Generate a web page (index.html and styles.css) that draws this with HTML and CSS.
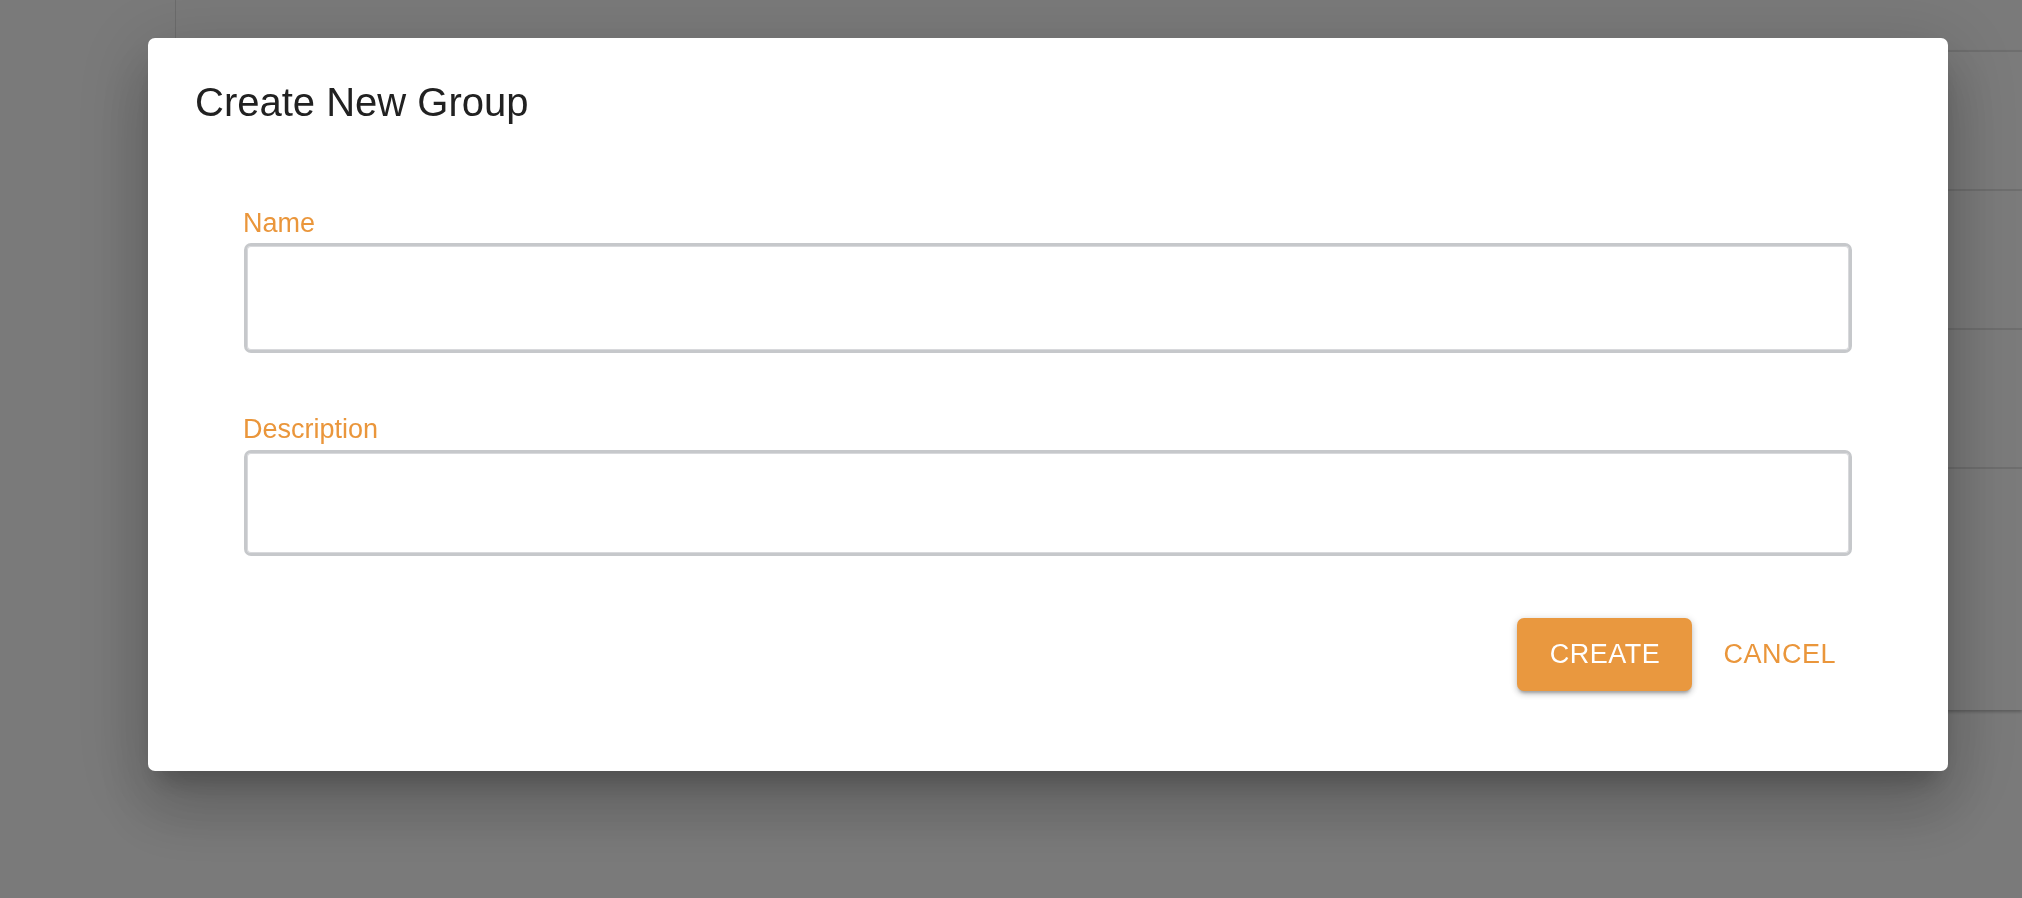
FILE: index.html
```html
<!DOCTYPE html>
<html lang="en">
<head>
<meta charset="utf-8">
<title>Create New Group</title>
<link rel="stylesheet" href="styles.css">
</head>
<body>
<div class="page">
  <aside class="sidebar">
    <div class="sidebar-head"></div>
  </aside>
  <main class="main">
    <div class="card">
      <div class="row"></div>
      <div class="row"></div>
      <div class="row"></div>
      <div class="row row-last"></div>
    </div>
  </main>
</div>
<div class="overlay">
  <div class="dialog" role="dialog">
    <h2 class="dialog-title">Create New Group</h2>
    <form class="dialog-form">
      <div class="field field-name">
        <label class="field-label" for="name">Name</label>
        <textarea class="field-input input-name" id="name"></textarea>
      </div>
      <div class="field field-desc">
        <label class="field-label" for="desc">Description</label>
        <textarea class="field-input input-desc" id="desc"></textarea>
      </div>
      <div class="actions">
        <button type="button" class="btn btn-primary">CREATE</button>
        <button type="button" class="btn btn-text">CANCEL</button>
      </div>
    </form>
  </div>
</div>
</body>
</html>
```

FILE: styles.css
```css
html, body {
  margin: 0;
  padding: 0;
  height: 100%;
}

body {
  font-family: "Liberation Sans", Arial, sans-serif;
  background: #f5f5f5;
  overflow: hidden;
}

.page {
  display: flex;
  height: 898px;
}

.sidebar {
  width: 176px;
  flex: none;
}

.sidebar-head {
  height: 360px;
  border-right: 1px solid #d8d8d8;
}

.main {
  flex: 1;
  padding: 50px 0 0 300px;
}

.card {
  background: #f6f6f6;
  border-top: 2px solid #dcdcdc;
  box-shadow: 0 2px 3px rgba(0, 0, 0, 0.25);
}

.row {
  height: 137px;
  border-bottom: 2px solid #dcdcdc;
}

.row-last {
  height: 241px;
  border-bottom: none;
}

.overlay {
  position: fixed;
  inset: 0;
  background: rgba(0, 0, 0, 0.5);
  padding: 38px 0 0 148px;
}

.dialog {
  width: 1800px;
  box-sizing: border-box;
  background: #fff;
  border-radius: 7px;
  padding: 40px 96px 80px;
  display: flex;
  flex-direction: column;
  box-shadow:
    0 18px 24px -11px rgba(0, 0, 0, 0.22),
    0 38px 61px 5px rgba(0, 0, 0, 0.15),
    0 14px 74px 13px rgba(0, 0, 0, 0.12);
}

.dialog-title {
  margin: 0 0 0 -49px;
  font-size: 40px;
  line-height: 48px;
  font-weight: 400;
  color: #212121;
}

.dialog-form {
  display: flex;
  flex-direction: column;
  margin-top: 81px;
}

.field {
  display: flex;
  flex-direction: column;
}

.field-desc {
  margin-top: 60px;
}

.field-label {
  font-size: 27px;
  line-height: 32px;
  color: #ea963b;
  margin-left: -1px;
}

.field-input {
  display: block;
  box-sizing: border-box;
  width: 100%;
  margin: 4px 0 0;
  resize: none;
  border: 3px solid #c6c8cb;
  border-radius: 7px;
  box-shadow: inset 0 0 0 1px #d8d9dc;
  background: #fff;
  font: inherit;
  outline: none;
}

.input-name {
  height: 110px;
}

.field-desc .field-input {
  margin-top: 5px;
  height: 106px;
}

.actions {
  display: flex;
  justify-content: flex-end;
  align-items: center;
  gap: 15px;
  margin-top: 62px;
}

.btn {
  font-family: "Liberation Sans", Arial, sans-serif;
  font-size: 27px;
  letter-spacing: 0.5px;
  height: 73px;
  border: none;
  border-radius: 7px;
  cursor: pointer;
  line-height: 1;
}

.btn-primary {
  width: 175px;
  background: #e9983f;
  color: #fff;
  box-shadow:
    0 4px 3px -2px rgba(0, 0, 0, 0.22),
    0 3px 6px 0 rgba(0, 0, 0, 0.16),
    0 1px 9px 0 rgba(0, 0, 0, 0.12);
}

.btn-text {
  background: transparent;
  color: #ea963b;
  padding: 0 16px;
}
```
